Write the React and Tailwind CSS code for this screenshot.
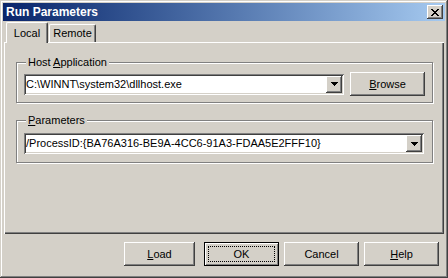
import React from "react";

const raised =
  "shadow-[inset_-1px_-1px_#404040,inset_1px_1px_#fff,inset_-2px_-2px_#808080,inset_2px_2px_#d4d0c8]";

function Arrow() {
  return (
    <div className={`w-[16px] h-[17px] bg-[#d4d0c8] flex items-center justify-center ${raised}`}>
      <svg width="7" height="4" viewBox="0 0 7 4" shapeRendering="crispEdges">
        <path d="M0 0h7v1h-1v1h-1v1h-1v1h-1v-1h-1v-1h-1v-1h-1z" fill="#000" />
      </svg>
    </div>
  );
}

function Combo({ width, text }) {
  return (
    <div
      className={`${width} h-[21px] bg-white flex items-center justify-between pl-[2px] pr-[2px] shadow-[inset_1px_1px_#808080,inset_-1px_-1px_#fff,inset_2px_2px_#404040,inset_-2px_-2px_#d4d0c8]`}
    >
      <span className="whitespace-nowrap leading-[13px]">{text}</span>
      <Arrow />
    </div>
  );
}

function Button({ children, w = "w-[75px]" }) {
  return (
    <div className={`${w} h-[24px] flex items-center justify-center ${raised}`}>
      <span className="leading-[13px]">{children}</span>
    </div>
  );
}

function Group({ label, className, children }) {
  return (
    <div
      className={`relative border border-[#808080] shadow-[1px_1px_#fff,inset_1px_1px_#fff] ${className}`}
    >
      <span className="absolute left-[9px] top-[-7px] px-[2px] bg-[#d4d0c8] leading-[13px]">
        {label}
      </span>
      {children}
    </div>
  );
}

export default function App() {
  return (
    <div className="w-[448px] h-[278px] bg-[#d4d0c8] p-[3px] flex flex-col font-['Liberation_Sans',Arial,sans-serif] text-[11px] text-black overflow-hidden shadow-[inset_-1px_-1px_#404040,inset_1px_1px_#d4d0c8,inset_-2px_-2px_#808080,inset_2px_2px_#fff]">
      {/* Title bar */}
      <div className="h-[18px] shrink-0 flex items-center justify-between bg-gradient-to-r from-[#0a246a] to-[#a6caf0] pl-[3px] pr-[2px]">
        <span className="text-white font-bold text-[12px] leading-[14px]">Run Parameters</span>
        <div className={`w-[16px] h-[14px] bg-[#d4d0c8] flex items-center justify-center ${raised}`}>
          <svg width="8" height="7" viewBox="0 0 8 7" shapeRendering="crispEdges">
            <path
              d="M0 0h2v1h-2zM6 0h2v1h-2zM1 1h2v1h-2zM5 1h2v1h-2zM2 2h4v1h-4zM3 3h2v1h-2zM2 4h4v1h-4zM1 5h2v1h-2zM5 5h2v1h-2zM0 6h2v1h-2zM6 6h2v1h-2z"
              fill="#000"
            />
          </svg>
        </div>
      </div>

      {/* Tabs */}
      <div className="h-[21px] shrink-0 flex items-end pl-[3px]">
        <div className="relative z-10 h-[21px] w-[42px] -mb-[1px] bg-[#d4d0c8] border-l border-t border-white border-r border-r-[#404040] rounded-t-[2px] shadow-[inset_-1px_0_#808080] flex items-start justify-center pt-[4px]">
          <span className="leading-[13px]">Local</span>
        </div>
        <div className="ml-[1px] h-[18px] w-[47px] border-l border-t border-r border-white border-r-[#404040] rounded-t-[2px] shadow-[inset_-1px_0_#808080] flex items-start justify-center pt-[2px]">
          <span className="leading-[13px]">Remote</span>
        </div>
      </div>

      {/* Panel */}
      <div className="mx-[1px] h-[192px] shrink-0 flex flex-col pt-[20px] pl-[12px] pr-[11px] shadow-[inset_1px_1px_#fff,inset_-1px_-1px_#404040,inset_-2px_-2px_#808080]">
        <Group label={<>Host <u>A</u>pplication</>} className="h-[41px] pt-[9px] pl-[7px]">
          <div className="flex items-center gap-[6px]">
            <Combo width="w-[320px]" text="C:\WINNT\system32\dllhost.exe" />
            <Button>
              <u>B</u>rowse
            </Button>
          </div>
        </Group>
        <Group label={<><u>P</u>arameters</>} className="mt-[17px] h-[43px] pt-[12px] pl-[7px]">
          <Combo width="w-[400px]" text="/ProcessID:{BA76A316-BE9A-4CC6-91A3-FDAA5E2FFF10}" />
        </Group>
      </div>

      {/* Buttons */}
      <div className="mt-[8px] flex justify-end pr-[6px]">
        <Button w="w-[71px]">
          <u>L</u>oad
        </Button>
        <div className="relative ml-[9px] w-[75px] h-[24px] border border-black flex items-center justify-center shadow-[inset_1px_1px_#fff,inset_-1px_-1px_#808080]">
          <div className="absolute inset-[3px] border border-dotted border-black" />
          <span className="leading-[13px]">OK</span>
        </div>
        <div className="ml-[5px]">
          <Button>Cancel</Button>
        </div>
        <div className="ml-[5px]">
          <Button>
            <u>H</u>elp
          </Button>
        </div>
      </div>
    </div>
  );
}
